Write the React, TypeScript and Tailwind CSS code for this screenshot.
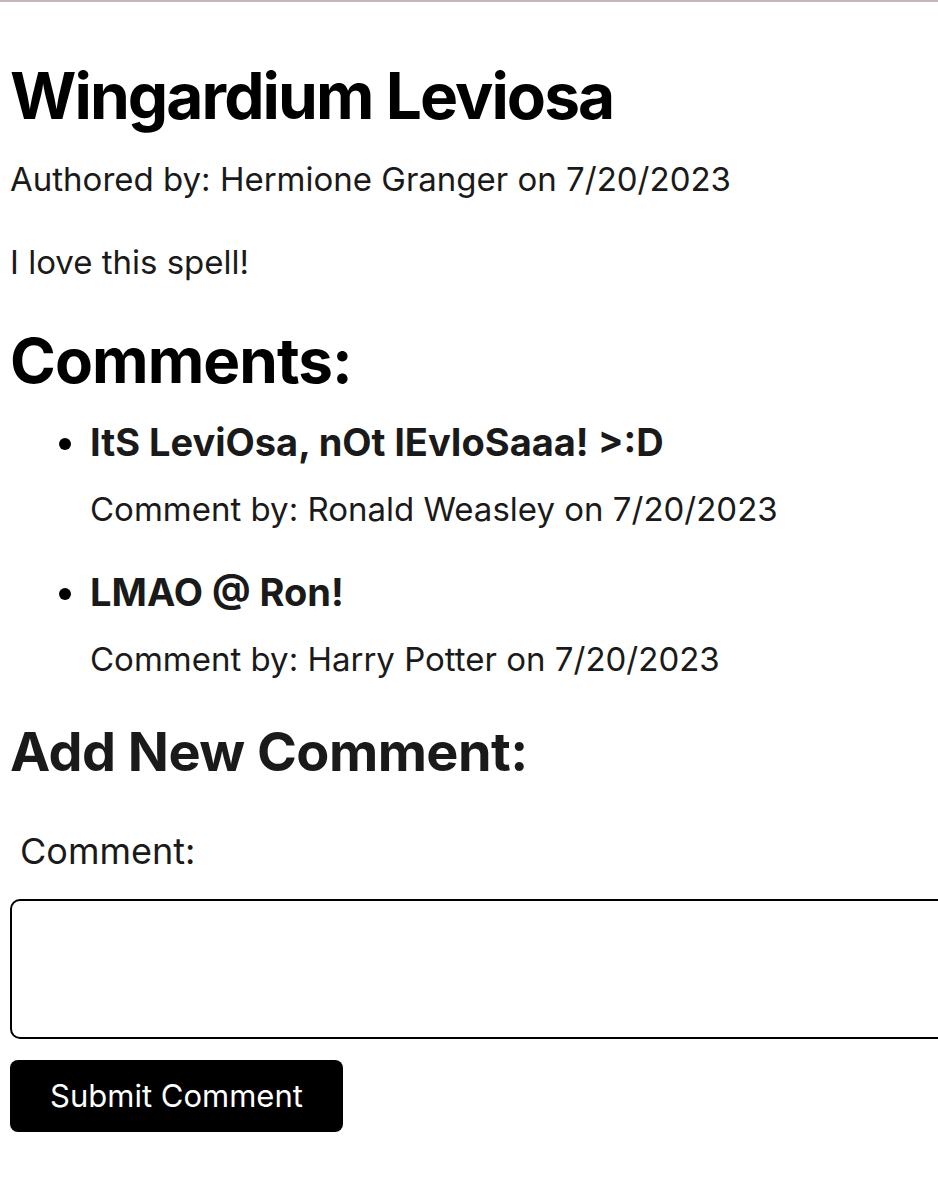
const comments = [
  { text: "ItS LeviOsa, nOt lEvIoSaaa! >:D", author: "Ronald Weasley", date: "7/20/2023" },
  { text: "LMAO @ Ron!", author: "Harry Potter", date: "7/20/2023" },
];

const App = () => {
  return (
    <div className="min-h-screen bg-white border-t-2 border-[#c9b6b6] font-['Inter','Liberation_Sans',sans-serif] text-black overflow-hidden">
      <div className="px-[10px]">
        <h1 className="mt-[56px] text-[64px] font-bold leading-[1.2] tracking-[-0.03em]">Wingardium Leviosa</h1>
        <p className="mt-[25px] text-[33px] leading-[1.2] text-[#1a1a1a]">
          Authored by: Hermione Granger on 7/20/2023
        </p>
        <p className="mt-[44px] text-[33px] leading-[1.2] text-[#1a1a1a]">I love this spell!</p>

        <h2 className="mt-[41px] text-[62px] font-bold leading-[1.2] tracking-[-0.015em]">Comments:</h2>
        <ul className="list-disc pl-[80px] text-[38px]">
          {comments.map((c, i) => (
            <li key={i} className={i === 0 ? "mt-[16px]" : "mt-[34px]"}>
              <p className="font-bold leading-[1.2] text-[#1a1a1a]">{c.text}</p>
              <p className={`${i === 0 ? "mt-[24px]" : "mt-[25px]"} text-[33px] leading-[1.2] text-[#1a1a1a]`}>
                Comment by: {c.author} on {c.date}
              </p>
            </li>
          ))}
        </ul>

        <h2 className="mt-[40px] text-[54px] font-bold leading-[1.2] tracking-[-0.01em] text-[#1a1a1a]">
          Add New Comment:
        </h2>
        <form className="flex flex-col items-start" onSubmit={(e) => e.preventDefault()}>
          <label htmlFor="comment" className="mt-[45px] ml-[10px] text-[36px] leading-[1.2] text-[#1a1a1a]">
            Comment:
          </label>
          <textarea
            id="comment"
            className="mt-[26px] h-[140px] w-[1000px] rounded-[10px] border-2 border-black resize-none"
          />
          <button
            type="submit"
            className="mt-[21px] h-[72px] w-[333px] rounded-[8px] bg-black text-[31px] text-white leading-[1.2]"
          >
            Submit Comment
          </button>
        </form>
      </div>
    </div>
  );
};

export default App;
